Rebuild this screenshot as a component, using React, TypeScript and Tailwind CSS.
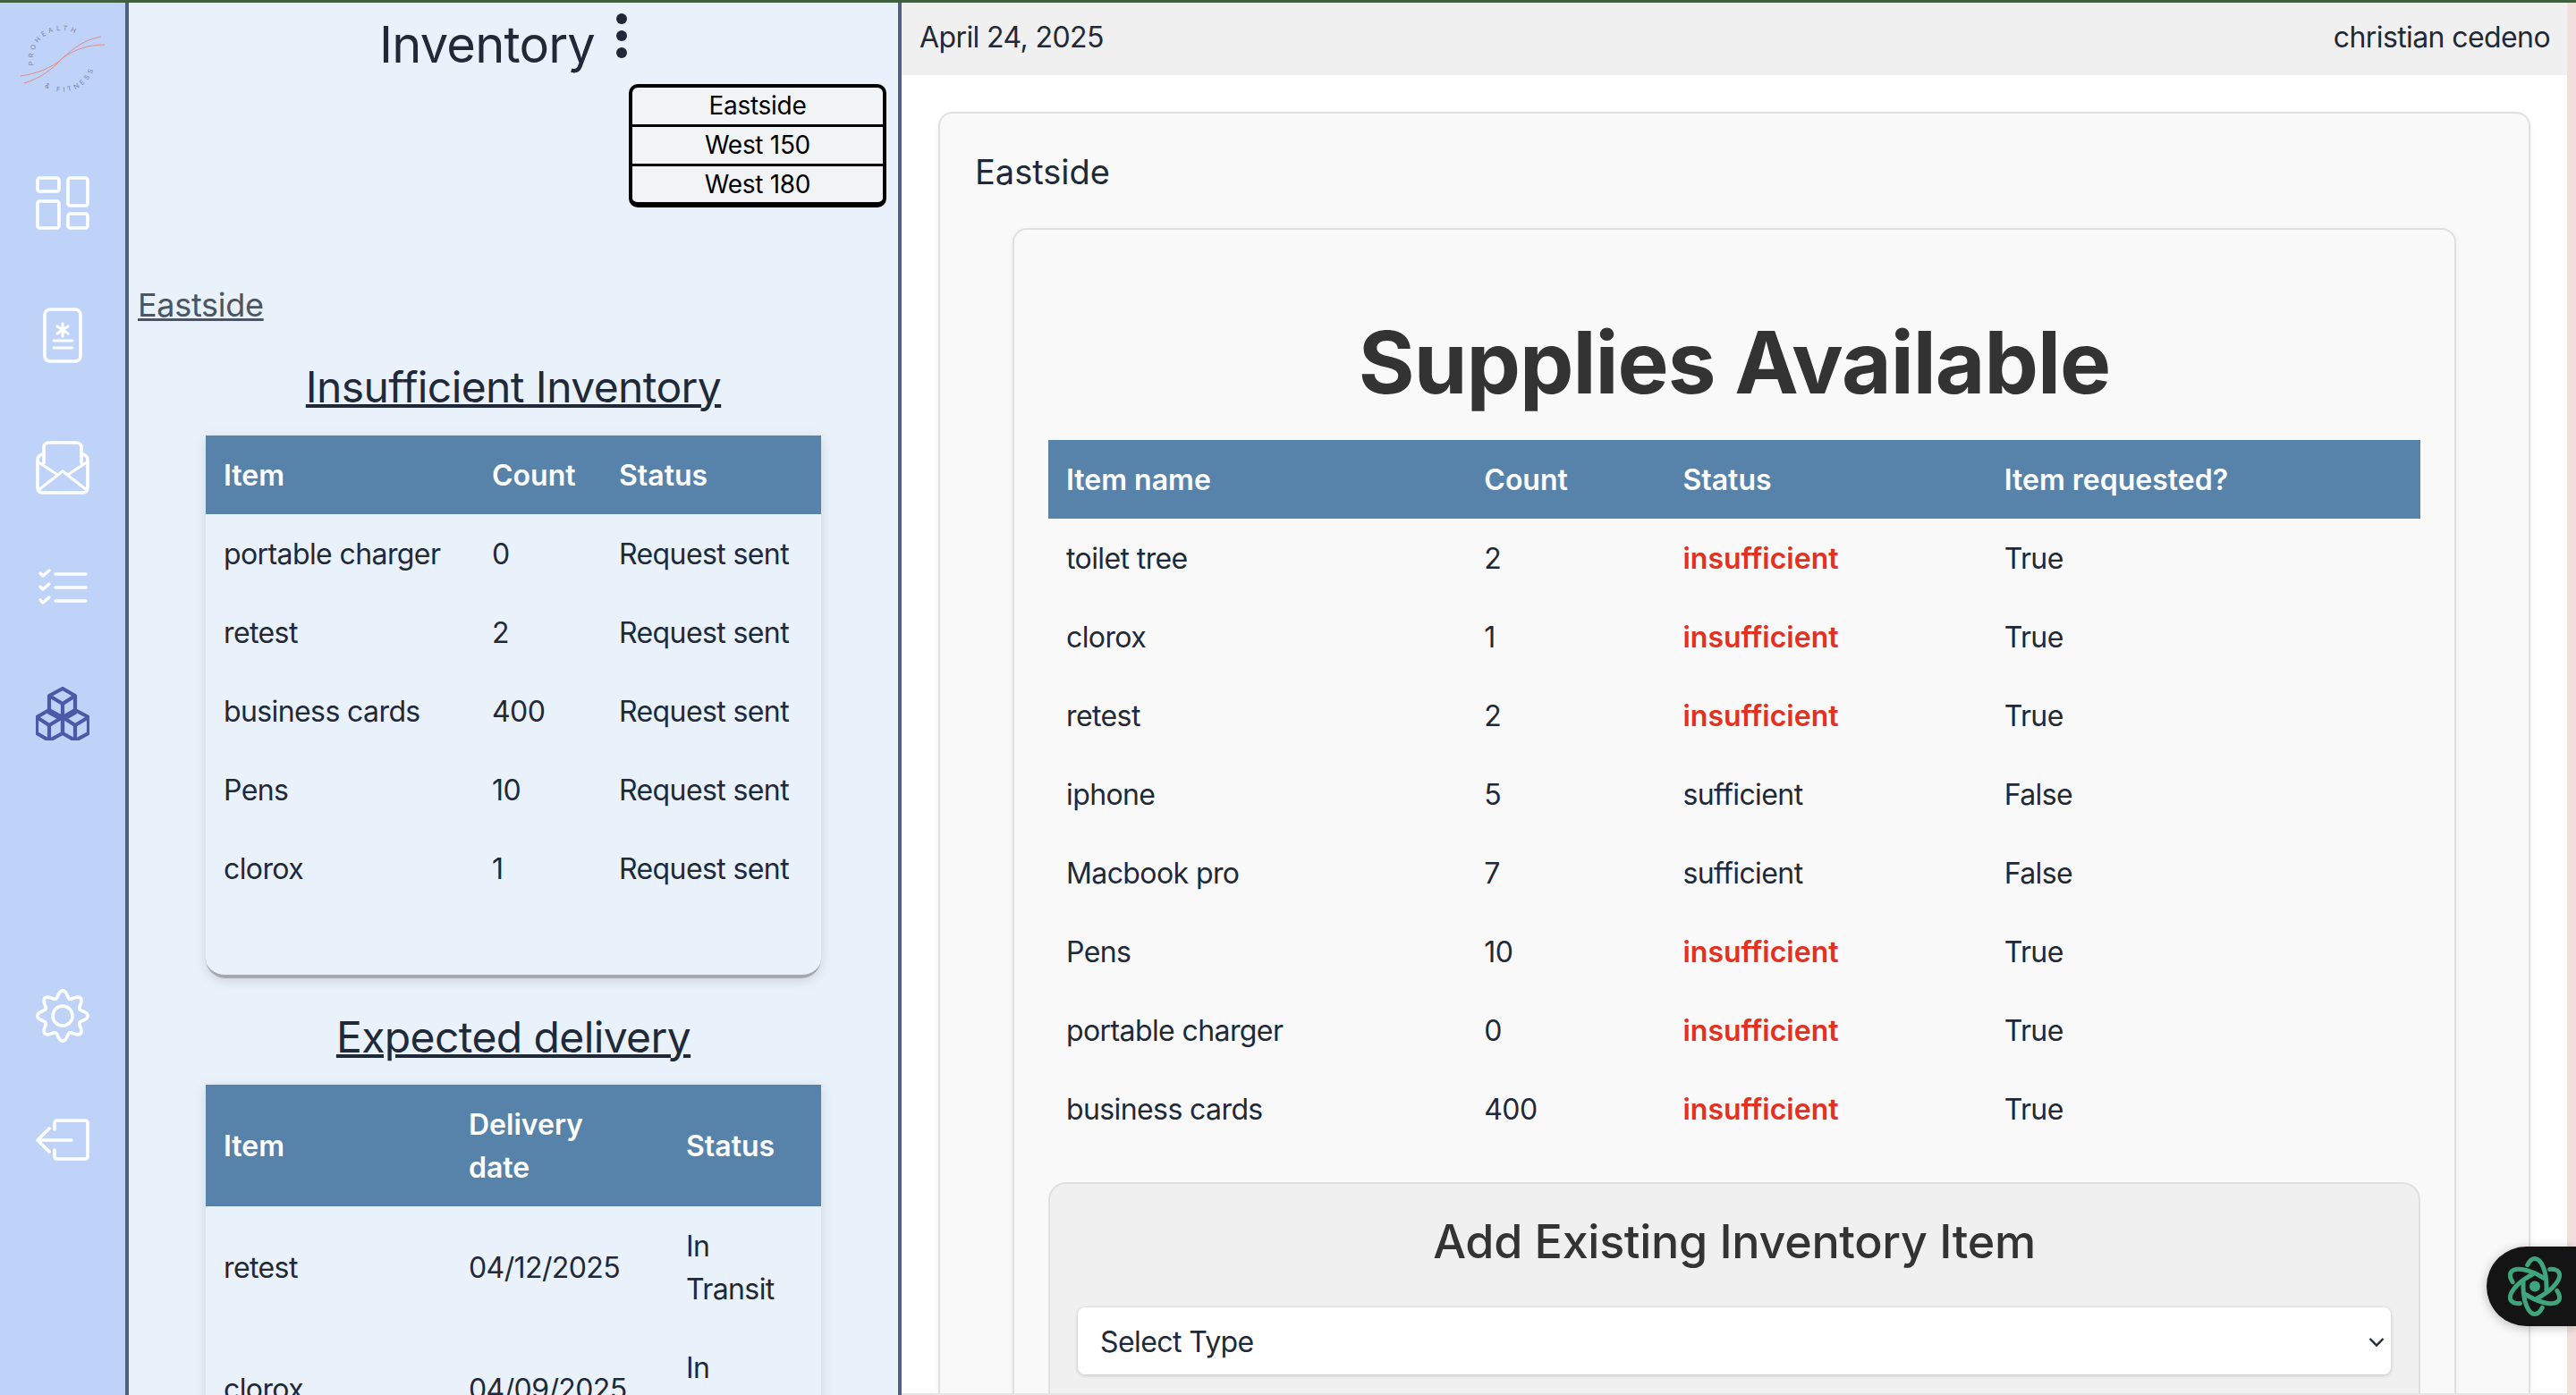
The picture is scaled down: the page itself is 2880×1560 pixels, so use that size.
import React from 'react';

const lowRows = [
  ['portable charger', '0', 'Request sent'],
  ['retest', '2', 'Request sent'],
  ['business cards', '400', 'Request sent'],
  ['Pens', '10', 'Request sent'],
  ['clorox', '1', 'Request sent'],
];

const supplies = [
  ['toilet tree', '2', 'insufficient', 'True'],
  ['clorox', '1', 'insufficient', 'True'],
  ['retest', '2', 'insufficient', 'True'],
  ['iphone', '5', 'sufficient', 'False'],
  ['Macbook pro', '7', 'sufficient', 'False'],
  ['Pens', '10', 'insufficient', 'True'],
  ['portable charger', '0', 'insufficient', 'True'],
  ['business cards', '400', 'insufficient', 'True'],
];

function gearPath() {
  const pts: string[] = [];
  for (let i = 0; i < 160; i++) {
    const t = (i / 160) * Math.PI * 2;
    const r = 24.3 + 3.9 * Math.cos(8 * t);
    pts.push(`${(30 + r * Math.sin(t)).toFixed(2)},${(30 - r * Math.cos(t)).toFixed(2)}`);
  }
  return 'M' + pts.join('L') + 'Z';
}

function Logo() {
  return (
    <svg viewBox="0 0 140 110" className="block h-[110px] w-[140px] shrink-0">
      <defs>
        <path id="logo-top" d="M38,70 A32,32 0 0 1 95,44" />
        <path id="logo-bottom" d="M50,94 A37,37 0 0 0 106,56" />
      </defs>
      <text fontSize="7.5" fill="#7a86ab" letterSpacing="3.4">
        <textPath href="#logo-top">PROHEALTH</textPath>
      </text>
      <text fontSize="7.5" fill="#7a86ab" letterSpacing="3.4">
        <textPath href="#logo-bottom">&amp; FITNESS</textPath>
      </text>
      <path d="M23,82 C42,79 58,73 70,62 C82,51 95,41 113,38" fill="none" stroke="#e08d8a" strokeWidth="1" />
      <path d="M27,90 C44,85 58,75 70,62 C82,53 98,47 117,47" fill="none" stroke="#e08d8a" strokeWidth="1" />
    </svg>
  );
}

function NavIcon({ h, className, children }: { h: number; className: string; children: React.ReactNode }) {
  return (
    <svg
      viewBox={`0 0 60 ${h}`}
      width={60}
      height={h}
      className={`block shrink-0 ${className}`}
      fill="none"
      stroke="#ffffff"
      strokeWidth="3.6"
      strokeLinecap="round"
      strokeLinejoin="round"
    >
      {children}
    </svg>
  );
}

function Th({ children }: { children: React.ReactNode }) {
  return <th className="px-5 pb-[19px] pt-[21px] text-left align-middle font-semibold tracking-normal text-white">{children}</th>;
}

function Td({ children, className = '' }: { children: React.ReactNode; className?: string }) {
  return <td className={`px-5 pb-[19px] pt-[21px] align-middle ${className}`}>{children}</td>;
}

export default function App() {
  return (
    <div className="relative h-[1560px] w-full overflow-hidden bg-white text-[32px] leading-[48px] tracking-[-0.6px] text-[#1f2937] [font-family:Inter,sans-serif]">
      <div className="h-[3px] bg-[#3f5f3f]" />
      <div className="flex h-[1557px]">
        {/* nav rail */}
        <div className="flex w-[144px] shrink-0 flex-col items-center border-r-4 border-[#4f6080] bg-[#bfd3f8]">
          <Logo />
          <NavIcon h={60} className="mt-[84px]">
            <rect x="2" y="2" width="24" height="15" rx="2.5" />
            <rect x="36" y="2" width="22" height="31" rx="2.5" />
            <rect x="2" y="28" width="24" height="30" rx="2.5" />
            <rect x="36" y="42" width="22" height="16" rx="2.5" />
          </NavIcon>
          <NavIcon h={62} className="mt-[87px]">
            <rect x="10" y="2" width="40" height="58" rx="6" />
            <path d="M30,18 V32 M24,21 L36,29 M36,21 L24,29" strokeWidth="3.2" />
            <path d="M20,37 H41 M20,45 H41" strokeWidth="3" />
          </NavIcon>
          <NavIcon h={60} className="mt-[87px]">
            <path d="M9,25 V8 Q9,2 15,2 H45 Q51,2 51,8 V25" />
            <path d="M9,14 L5,16 Q2,18 2,21 V52 Q2,58 8,58 H52 Q58,58 58,52 V21 Q58,18 55,16 L51,14" />
            <path d="M3,55 L30,34 L57,55" strokeWidth="3.2" />
            <path d="M3,24 L23,37 M57,24 L37,37" strokeWidth="3.2" />
          </NavIcon>
          <NavIcon h={44} className="mt-[82px]">
            <path d="M5,6 L8,9 L15,3 M5,21 L8,24 L15,18 M5,36 L8,39 L15,33" strokeWidth="3.4" />
            <path d="M22,7 H56 M22,22 H56 M22,37 H56" strokeWidth="3.6" />
          </NavIcon>
          <svg
            viewBox="0 0 60 60"
            width={60}
            height={60}
            className="mt-[89px] block shrink-0"
            fill="none"
            stroke="#4a5aa8"
            strokeWidth="4.2"
            strokeLinejoin="round"
          >
            <path d="M30,2 L44,10 V29 L30,37 L15,29 V10 Z M15,10 L30,19 L44,10 M30,19 V37" />
            <path d="M15,26 L1,34 V52 L15,60 L30,52 V34 Z M1,34 L15,43 L30,34 M15,43 V60" />
            <path d="M44,26 L59,34 V52 L44,60 L30,52 V34 Z M59,34 L44,43 L30,34 M44,43 V60" />
          </svg>
          <NavIcon h={60} className="mt-[278px]">
            <path d={gearPath()} />
            <circle cx="30" cy="30" r="11" />
          </NavIcon>
          <NavIcon h={48} className="mt-[85px]">
            <path d="M21,12 V5 Q21,2 24,2 H55 Q58,2 58,5 V42 Q58,45 55,45 H24 Q21,45 21,42 V35" />
            <path d="M40,24 H3 M15,11 L2,24 L15,37" />
          </NavIcon>
        </div>

        {/* inventory column */}
        <div className="flex w-[864px] shrink-0 flex-col overflow-hidden border-r-4 border-[#4f6080] bg-[#e9f1fb]">
          <div className="flex shrink-0 pl-[280px] pt-[12px]">
            <h1 className="text-[56px] font-normal leading-[70px] tracking-[-0.8px]">Inventory</h1>
            <div className="ml-[24px] flex flex-col gap-[7px]">
              <span className="h-3 w-3 rounded-full bg-[#1f2937]" />
              <span className="h-3 w-3 rounded-full bg-[#1f2937]" />
              <span className="h-3 w-3 rounded-full bg-[#1f2937]" />
            </div>
          </div>
          <div className="ml-[559px] mt-[9px] w-[288px] shrink-0 overflow-hidden rounded-[10px] border-[4px] border-b-[6px] border-black bg-[#f2f3f5] text-center text-[28px] leading-[41px] tracking-[-0.3px] text-black">
            <div className="border-b-[3px] border-black">Eastside</div>
            <div className="border-b-[3px] border-black">West 150</div>
            <div className="h-[40px]">West 180</div>
          </div>
          <a className="ml-[10px] mt-[81px] w-fit shrink-0 text-[36px] leading-[56px] tracking-[-0.3px] text-[#4b5563] underline decoration-[3px]">Eastside</a>
          <h2 className="mt-[28px] shrink-0 text-center text-[48px] font-normal leading-[72px] underline decoration-[4px]">Insufficient Inventory</h2>
          <div className="ml-[86px] mt-[18px] h-[607px] w-[688px] shrink-0 rounded-b-[22px] border-b-[4px] border-[#a5a8ad] shadow-[0_3px_14px_rgba(0,0,0,0.12)]">
            <table className="w-full table-fixed border-collapse">
              <colgroup>
                <col className="w-[300px]" />
                <col className="w-[142px]" />
                <col className="w-[246px]" />
              </colgroup>
              <thead className="bg-[#5783ab]">
                <tr>
                  <Th>Item</Th>
                  <Th>Count</Th>
                  <Th>Status</Th>
                </tr>
              </thead>
              <tbody>
                {lowRows.map((r) => (
                  <tr key={r[0]}>
                    <Td>{r[0]}</Td>
                    <Td>{r[1]}</Td>
                    <Td>{r[2]}</Td>
                  </tr>
                ))}
              </tbody>
            </table>
          </div>
          <h2 className="mt-[30px] shrink-0 text-center text-[48px] font-normal leading-[72px] underline decoration-[4px]">Expected delivery</h2>
          <div className="ml-[86px] mt-[17px] w-[688px] shrink-0 shadow-[0_3px_14px_rgba(0,0,0,0.12)]">
            <table className="w-full table-fixed border-collapse">
              <colgroup>
                <col className="w-[274px]" />
                <col className="w-[243px]" />
                <col className="w-[171px]" />
              </colgroup>
              <thead className="bg-[#5783ab]">
                <tr>
                  <Th>Item</Th>
                  <Th>Delivery date</Th>
                  <Th>Status</Th>
                </tr>
              </thead>
              <tbody>
                <tr>
                  <Td>retest</Td>
                  <Td>04/12/2025</Td>
                  <Td>In Transit</Td>
                </tr>
                <tr>
                  <Td>clorox</Td>
                  <Td>04/09/2025</Td>
                  <Td>In Transit</Td>
                </tr>
              </tbody>
            </table>
          </div>
        </div>

        {/* main */}
        <div className="flex min-w-0 flex-1 flex-col overflow-hidden border-b-2 border-[#e5e5e5]">
          <div className="flex h-[81px] shrink-0 items-center justify-between bg-[#f0f0f0] pb-[3px] pl-[20px] pr-[19px]">
            <span>April 24, 2025</span>
            <span>christian cedeno</span>
          </div>
          <div className="mx-[41px] mt-[41px] shrink-0 rounded-t-[16px] border-2 border-[#e0e0e0] bg-[#f9f9f9] px-[81px] pb-10 shadow-[0_2px_6px_rgba(0,0,0,0.06)]">
            <h3 className="-mx-[42px] mt-[35px] text-[38px] font-normal leading-[60px] tracking-normal">Eastside</h3>
            <div className="mt-[33px] rounded-t-[16px] border-2 border-[#e0e0e0] bg-[#f9f9f9] pb-10 pl-[38px] pr-[38px] shadow-[0_2px_6px_rgba(0,0,0,0.06)]">
              <h1 className="mt-[88px] text-center text-[96px] font-bold leading-[120px] tracking-[-1px] text-[#333333]">Supplies Available</h1>
              <table className="mt-[27px] w-full table-fixed border-collapse">
                <colgroup>
                  <col className="w-[467px]" />
                  <col className="w-[222px]" />
                  <col className="w-[359px]" />
                  <col className="w-[485px]" />
                </colgroup>
                <thead className="bg-[#5783ab]">
                  <tr>
                    <Th>Item name</Th>
                    <Th>Count</Th>
                    <Th>Status</Th>
                    <Th>Item requested?</Th>
                  </tr>
                </thead>
                <tbody>
                  {supplies.map((r) => (
                    <tr key={r[0]}>
                      <Td>{r[0]}</Td>
                      <Td>{r[1]}</Td>
                      <Td className={r[2] === 'insufficient' ? 'font-semibold tracking-normal text-[#e43020]' : ''}>{r[2]}</Td>
                      <Td>{r[3]}</Td>
                    </tr>
                  ))}
                </tbody>
              </table>
              <div className="mt-[38px] rounded-t-[20px] border-2 border-[#e0e0e0] bg-[#f0f0f0] px-[31px] pb-8">
                <h2 className="mt-[30px] text-center text-[52px] font-medium leading-[70px] tracking-[-0.3px] text-[#333333]">Add Existing Inventory Item</h2>
                <div className="mt-[38px] flex h-[75px] items-center justify-between rounded-lg bg-white pl-[25px] pr-[7px] pt-[2px] shadow-[0_1px_4px_rgba(0,0,0,0.2)]">
                  <span>Select Type</span>
                  <svg viewBox="0 0 18 12" width={18} height={12} fill="none" stroke="#1f2937" strokeWidth="2.4">
                    <path d="M1.5,2 L9,9.5 L16.5,2" />
                  </svg>
                </div>
              </div>
            </div>
          </div>
        </div>
        <div className="w-[10px] shrink-0 bg-[#f3e0de]" />
      </div>

      {/* floating assistant button */}
      <div className="absolute right-0 top-[1394px] flex h-[89px] w-[100px] items-center rounded-l-[45px] bg-[#141414] pl-[24px] shadow-[0_2px_12px_rgba(0,0,0,0.25)]">
        <svg viewBox="-30 -33.5 60 67" width={60} height={67} fill="none" stroke="#3fa57d" strokeWidth="5" strokeLinecap="round">
          <ellipse cx="0" cy="0" rx="31" ry="13" pathLength="100" strokeDasharray="36 14" strokeDashoffset="8" transform="rotate(30)" />
          <ellipse cx="0" cy="0" rx="31" ry="13" pathLength="100" strokeDasharray="36 14" strokeDashoffset="8" transform="rotate(90)" />
          <ellipse cx="0" cy="0" rx="31" ry="13" pathLength="100" strokeDasharray="36 14" strokeDashoffset="8" transform="rotate(150)" />
          <circle cx="0" cy="0" r="6" fill="#3fa57d" stroke="none" />
        </svg>
      </div>
    </div>
  );
}
